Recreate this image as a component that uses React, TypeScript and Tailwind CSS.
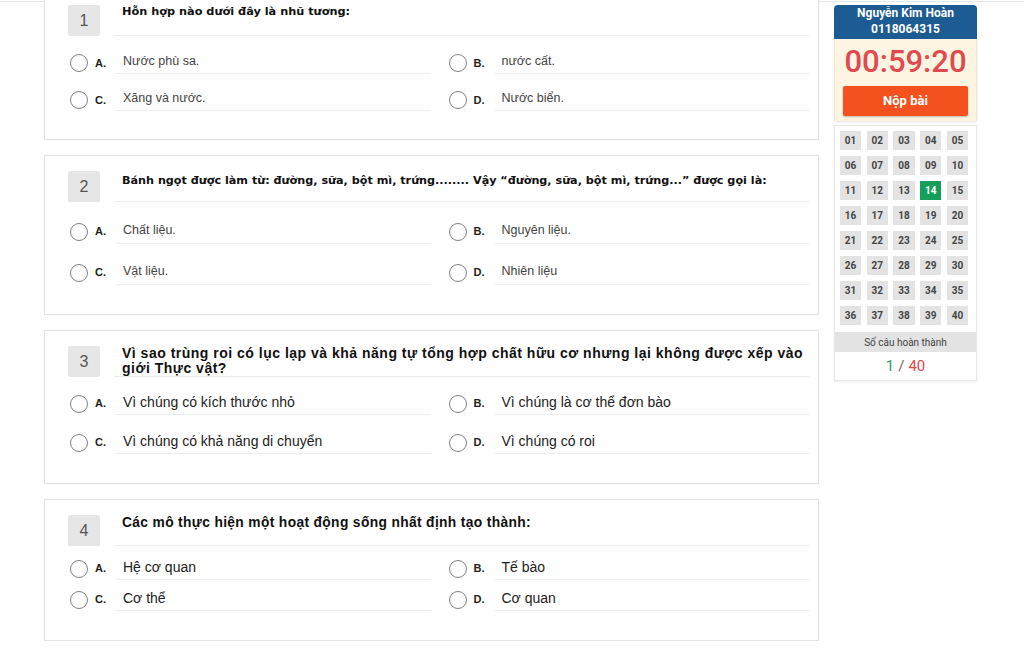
import React from "react";

type Option = { key: string; text: string };
type Question = {
  no: number;
  text: string;
  options: Option[];
  rows: [string, string]; // heights of the two option rows
  qClass: string; // question text style
  oClass: string; // option text style
};

const QUESTIONS: Question[] = [
  {
    no: 1,
    text: "Hỗn hợp nào dưới đây là nhũ tương:",
    options: [
      { key: "A", text: "Nước phù sa." },
      { key: "B", text: "nước cất." },
      { key: "C", text: "Xăng và nước." },
      { key: "D", text: "Nước biển." },
    ],
    rows: ["h-[38px]", "h-[37px]"],
    qClass: "font-['DejaVu_Sans',sans-serif] text-[11.3px] leading-[14px] font-bold",
    oClass: "text-[12.5px] text-[#444] pb-[2px]",
  },
  {
    no: 2,
    text: "Bánh ngọt được làm từ: đường, sữa, bột mì, trứng........ Vậy “đường, sữa, bột mì, trứng...” được gọi là:",
    options: [
      { key: "A", text: "Chất liệu." },
      { key: "B", text: "Nguyên liệu." },
      { key: "C", text: "Vật liệu." },
      { key: "D", text: "Nhiên liệu" },
    ],
    rows: ["h-[42px]", "h-[41px]"],
    qClass: "font-['DejaVu_Sans',sans-serif] text-[11.2px] leading-[14px] font-bold pt-[3px]",
    oClass: "text-[12.5px] text-[#444] pt-[2px] pb-[3px]",
  },
  {
    no: 3,
    text: "Vì sao trùng roi có lục lạp và khả năng tự tổng hợp chất hữu cơ nhưng lại không được xếp vào giới Thực vật?",
    options: [
      { key: "A", text: "Vì chúng có kích thước nhỏ" },
      { key: "B", text: "Vì chúng là cơ thể đơn bào" },
      { key: "C", text: "Vì chúng có khả năng di chuyển" },
      { key: "D", text: "Vì chúng có roi" },
    ],
    rows: ["h-[38px]", "h-[39px]"],
    qClass: "text-[14px] font-bold leading-[15px] tracking-[0.5px]",
    oClass: "text-[14px] text-[#222] pb-[1px]",
  },
  {
    no: 4,
    text: "Các mô thực hiện một hoạt động sống nhất định tạo thành:",
    options: [
      { key: "A", text: "Hệ cơ quan" },
      { key: "B", text: "Tế bào" },
      { key: "C", text: "Cơ thể" },
      { key: "D", text: "Cơ quan" },
    ],
    rows: ["h-[34px]", "h-[31px]"],
    qClass: "text-[13.8px] font-bold leading-[15px] tracking-[0.35px]",
    oClass: "text-[14px] text-[#222] pb-[1px]",
  },
];

function OptionRow({ opt, q, h }: { opt: Option; q: Question; h: string }) {
  return (
    <div className={`flex items-end ${h}`}>
      <div className="flex items-center w-full">
        <span className="w-[18px] h-[18px] rounded-full border-[1.5px] border-[#808080] shrink-0" />
        <span className="w-[21px] ml-[7px] text-[11px] font-bold text-[#222] shrink-0">{opt.key}.</span>
        <div className={`flex-1 border-b border-[#ececec] pl-[7px] ${q.oClass}`}>{opt.text}</div>
      </div>
    </div>
  );
}

function QuestionCard({ q, first }: { q: Question; first?: boolean }) {
  return (
    <div className={`border border-[#e3e3e3] bg-white shadow-[0_0_2px_rgba(0,0,0,0.04)] ${first ? "-mt-[13px] pb-[28px]" : "pb-[29px]"}`}>
      <div className="flex pt-[15px] pl-[23px] pr-[9px]">
        <div className="w-[32px] h-[31px] rounded-[2px] bg-[#e6e6e6] text-[#555] text-[16px] flex items-center justify-center shrink-0">
          {q.no}
        </div>
        <div className="ml-[14px] flex-1 border-b border-[#ececec] pl-[8px] text-[#111]">
          <div className={q.qClass}>{q.text}</div>
        </div>
      </div>
      <div className="grid grid-cols-2 gap-x-[18px] pl-[25px] pr-[9px]">
        {q.options.map((o, i) => (
          <OptionRow key={o.key} opt={o} q={q} h={q.rows[i < 2 ? 0 : 1]} />
        ))}
      </div>
    </div>
  );
}

function Sidebar() {
  const nums = Array.from({ length: 40 }, (_, i) => String(i + 1).padStart(2, "0"));
  return (
    <div className="w-[143px] mt-[3px] flex flex-col font-['Roboto',sans-serif]">
      <div className="h-[34px] rounded-t-[4px] bg-[#1d5b93] text-white text-center text-[12px] font-bold leading-[16px]">
        <div>Nguyễn Kim Hoàn</div>
        <div>0118064315</div>
      </div>
      <div className="bg-[#fdf5e1] border-x border-[#f0e6cc] px-[8px] pt-[5px] pb-[5px] shadow-[0_1px_2px_rgba(0,0,0,0.12)]">
        <div className="text-center text-[#e04a4f] text-[31px] leading-[36px] font-medium">00:59:20</div>
        <div className="mt-[6px] h-[30px] rounded-[2px] bg-[#f4511e] text-white text-[13px] font-bold flex items-center justify-center shadow-[0_1px_2px_rgba(0,0,0,0.25)]">
          Nộp bài
        </div>
      </div>
      <div className="mt-[4px] border border-[#e8e8e8] bg-white shadow-[0_1px_2px_rgba(0,0,0,0.08)]">
        <div className="grid grid-cols-5 gap-x-[5.5px] gap-y-[6px] pl-[5px] pr-[8px] pt-[5px] pb-[7px]">
          {nums.map((n) => (
            <div
              key={n}
              className={`h-[19px] flex items-center justify-center text-[10px] font-bold ${
                n === "14" ? "bg-[#14a05a] text-white" : "bg-[#e3e3e3] text-[#444]"
              }`}
            >
              {n}
            </div>
          ))}
        </div>
        <div className="bg-[#e3e3e3] text-center text-[10px] text-[#444] h-[20px] flex items-center justify-center">Số câu hoàn thành</div>
        <div className="text-center text-[15px] h-[28px] flex items-center justify-center gap-[4px]">
          <span className="text-[#2e9a6b]">1</span>
          <span className="text-[#666]">/</span>
          <span className="text-[#e0474c]">40</span>
        </div>
      </div>
    </div>
  );
}

export default function App() {
  return (
    <div className="w-[1024px] h-[655px] overflow-hidden bg-white font-['Liberation_Sans',Arial,sans-serif]">
      <div className="h-[2px] border-b border-[#e6e6e6]" />
      <div className="flex">
        <div className="ml-[44px] w-[775px] flex flex-col gap-[15px]">
          {QUESTIONS.map((q, i) => (
            <QuestionCard key={q.no} q={q} first={i === 0} />
          ))}
        </div>
        <div className="ml-[15px]">
          <Sidebar />
        </div>
      </div>
    </div>
  );
}
